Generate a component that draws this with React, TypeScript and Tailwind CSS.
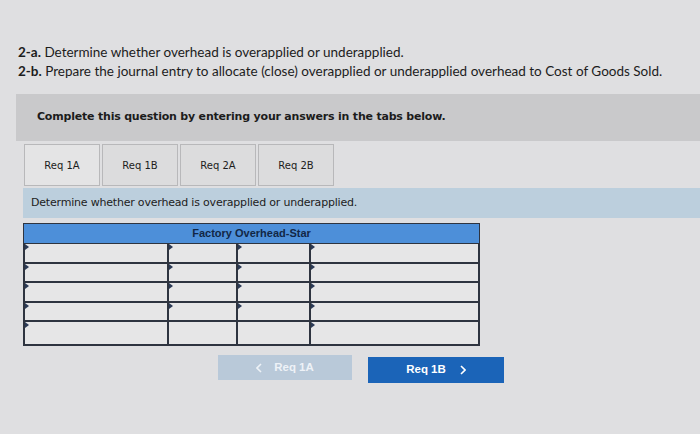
import React from 'react';

const TABS = ['Req 1A', 'Req 1B', 'Req 2A', 'Req 2B'];
const ROWS = 5;
const COLS = ['w-[144px]', 'w-[69px]', 'w-[73px]', 'flex-1'];

const Cell: React.FC<{ className: string; marker: boolean }> = ({ className, marker }) => (
  <div className={`relative h-full border border-[#2e3440] bg-[#e6e6e7] ${className}`}>
    {marker && (
      <span className="absolute left-0 top-0 h-0 w-0 border-y-[3px] border-l-[4px] border-y-transparent border-l-[#2b3a55]" />
    )}
  </div>
);

const Chevron: React.FC<{ dir: 'left' | 'right' }> = ({ dir }) => (
  <svg width="6" height="10" viewBox="0 0 6 10" fill="none" stroke="currentColor" strokeWidth="1.6">
    {dir === 'left' ? <path d="M5 1 L1 5 L5 9" /> : <path d="M1 1 L5 5 L1 9" />}
  </svg>
);

export default function App() {
  return (
    <div className="h-[434px] w-[700px] overflow-hidden bg-[#dfdfe1] font-['Lato',sans-serif] text-[#1c1c1c]">
      {/* Question text */}
      <div className="pl-[18px] pt-[43px] text-[13.5px] leading-[19px]">
        <p>
          <b>2-a.</b> Determine whether overhead is overapplied or underapplied.
        </p>
        <p>
          <b>2-b.</b> Prepare the journal entry to allocate (close) overapplied or underapplied overhead to Cost of Goods Sold.
        </p>
      </div>

      {/* Instructions bar */}
      <div className="ml-[16px] mt-[13px] flex h-[47px] items-center bg-[#c9c9cb] pl-[21px] font-['DejaVu_Sans',sans-serif] text-[11px] font-bold tracking-[-0.2px]">
        Complete this question by entering your answers in the tabs below.
      </div>

      {/* Tabs */}
      <div className="ml-[24px] mt-[3px] flex gap-[2px] font-['DejaVu_Sans',sans-serif] text-[10px]">
        {TABS.map((t, i) => (
          <div
            key={t}
            className={`flex h-[42px] w-[76px] items-center justify-center border border-[#b8b8ba] ${
              i === 0 ? 'bg-[#e4e4e5]' : 'bg-[#dcdcdd]'
            }`}
          >
            {t}
          </div>
        ))}
      </div>

      {/* Instruction band */}
      <div className="ml-[23px] mt-[2px] flex h-[30px] items-center bg-[#bccfdd] pl-[8px] font-['DejaVu_Sans',sans-serif] text-[11px] tracking-[-0.2px]">
        Determine whether overhead is overapplied or underapplied.
      </div>

      {/* T-account table */}
      <div className="ml-[23px] mt-[5px] w-[457px] border border-[#2e3440]">
        <div className="flex h-[19px] items-center justify-center bg-[#4d8fd9] font-['Liberation_Sans',sans-serif] text-[11px] font-bold text-[#122746]">
          Factory Overhead-Star
        </div>
        {Array.from({ length: ROWS }).map((_, r) => (
          <div key={r} className={`flex ${r === ROWS - 1 ? 'h-[24px]' : 'h-[19.5px]'}`}>
            {COLS.map((c, ci) => (
              <Cell key={ci} className={c} marker={!(r === ROWS - 1 && (ci === 1 || ci === 2))} />
            ))}
          </div>
        ))}
      </div>

      {/* Navigation buttons */}
      <div className="ml-[218px] mt-[9px] flex items-start gap-[16px] font-['Liberation_Sans',sans-serif] text-[11.5px] font-bold">
        <button className="flex h-[25px] w-[134px] items-center justify-center gap-[12px] bg-[#b9c9d9] text-[#eef2f7]">
          <Chevron dir="left" />
          <span>Req 1A</span>
        </button>
        <button className="mt-[2px] flex h-[26px] w-[136px] items-center justify-center gap-[14px] bg-[#1b64b8] text-white">
          <span>Req 1B</span>
          <Chevron dir="right" />
        </button>
      </div>
    </div>
  );
}
